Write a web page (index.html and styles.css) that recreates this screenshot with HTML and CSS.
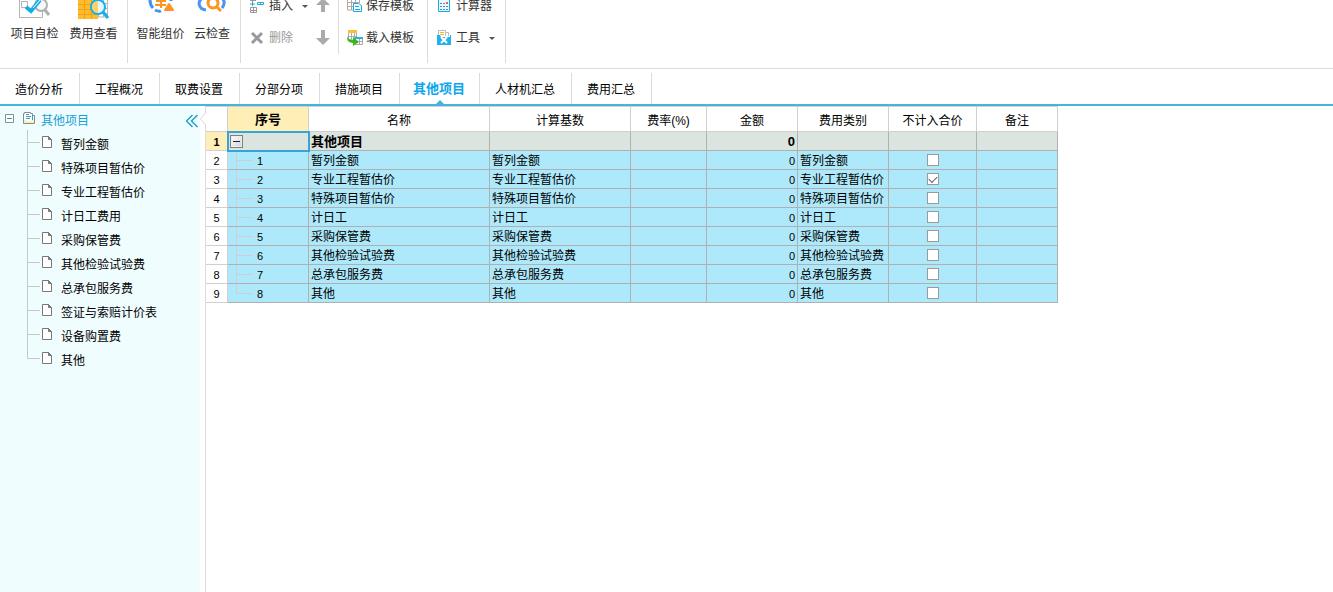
FILE: index.html
```html
<!DOCTYPE html>
<html lang="zh-CN">
<head>
<meta charset="utf-8">
<title>其他项目</title>
<link rel="stylesheet" href="styles.css">
</head>
<body>
<svg class="defs" aria-hidden="true">
  <symbol id="page" viewBox="0 0 10 12"><path d="M.5.5h6l3 3v8h-9z" fill="#fff" stroke="#777"/><path d="M6.5.5v3h3z" fill="#888" stroke="#777"/></symbol>
</svg>
<header class="ribbon">
  <div class="ribbon-inner">
    <div class="group large-group">
      <button class="large" type="button">
        <svg width="32" height="33" viewBox="0 0 32 33"><path d="M.5 1.500h23v30H.5z" fill="#fff" stroke="#b4b4b4"/><path d="M2.500 15.500h6v6h-6z" fill="none" stroke="#b4b4b4"/><circle cx="22" cy="19" r="6" fill="#f4f8fa" stroke="#b0b0b0" stroke-width="2"/><path d="M26 24l4 5" stroke="#b0b0b0" stroke-width="3"/><path d="M7 21l5 4 9-11" fill="none" stroke="#13aeea" stroke-width="4"/><path d="M14 22l7-8" stroke="#fff" stroke-width="1"/></svg>
        <span>项目自检</span></button>
      <button class="large" type="button">
        <svg width="32" height="33" viewBox="0 0 32 33"><path d="M15.500 4v27h14v-27M15 17.500h15M15 22.500h15M15 27.500h15M20.500 4v27M25.500 4v27" fill="none" stroke="#b8b8b8"/><path d="M0 2h20v31H0z" fill="#fdbb2d"/><path d="M0 18.500h13M0 23.500h13M0 28.500h20M6.500 14v19M13.500 14v19" stroke="#efa21a"/><circle cx="20" cy="21" r="7" fill="#e8f5fb" stroke="#12b1ed" stroke-width="2"/><path d="M14 21a6 6 0 0 1 6-6v12a6 6 0 0 1-6-6" fill="#ffd06a"/><path d="M25 26l5 6" stroke="#12b1ed" stroke-width="3"/></svg>
        <span>费用查看</span></button>
    </div>
    <div class="group large-group cloud-group">
      <button class="large" type="button">
        <svg width="32" height="33" viewBox="0 0 32 33"><path d="M5 14c0 4 1 6 3 8M10 24c2 1 4 2 6 1M26 12v3" fill="none" stroke="#4291f4" stroke-width="3"/><path d="M11 6l5 6 5-6M11 15h10M10 19h11M16 12v10" fill="none" stroke="#ff941f" stroke-width="2"/><path d="M24 18l4 6h-8z" fill="#ff941f" stroke="#ff941f" stroke-width="2" stroke-linejoin="round"/></svg>
        <span>智能组价</span></button>
      <button class="large narrow" type="button">
        <svg width="32" height="33" viewBox="0 0 32 33"><path d="M10 24c-8-1-9-9-3-12M26 12c3 3 3 6 0 10" fill="none" stroke="#4995f5" stroke-width="3"/><circle cx="17" cy="17" r="5" fill="#fff" stroke="#ff941f" stroke-width="3"/><path d="M20 20l5 5" stroke="#ff941f" stroke-width="3"/></svg>
        <span>云检查</span></button>
    </div>
    <div class="group small-group edit-group">
      <div class="column">
        <button class="small" type="button">
          <svg width="16" height="16" viewBox="0 0 16 16"><path d="M3.500 0v4M1 2.500h6M1.500 9.500h6v5h-6zM4.500 9v6M1 12.500h7" fill="none" stroke="#999"/><path d="M1 6h5M3.500 4v4M8.500 4.500h3v2h-3zM11.500 4.500h3v2h-3z" fill="none" stroke="#1aabdf"/></svg>
          <span>插入</span><i class="caret"></i></button>
        <button class="small disabled" type="button" disabled>
          <svg width="16" height="16" viewBox="0 0 16 16"><path d="M3 3l10 10M13 3L3 13" stroke="#999" stroke-width="3"/></svg>
          <span>删除</span></button>
      </div>
      <div class="column arrows">
        <button class="small" type="button" aria-label="上移"><svg width="14" height="16" viewBox="0 0 14 16"><path d="M7 0l7 7H9v7H5V7H0z" fill="#aaa"/></svg></button>
        <button class="small" type="button" aria-label="下移"><svg width="14" height="16" viewBox="0 0 14 16"><path d="M7 15l7-7H9V0H5v8H0z" fill="#aaa"/></svg></button>
      </div>
    </div>
    <div class="group small-group template-group">
      <div class="column">
        <button class="small" type="button">
          <svg width="16" height="16" viewBox="0 0 16 16"><path d="M.5 0v12h6M0 4.500h12M0 8.500h7M4.500 0v12M8.500 0v5M12.500 0v5" fill="none" stroke="#b5aaa1"/><path d="M6.500 5.500h5l3 2v6h-8z" fill="#fff" stroke="#14a9e5"/><path d="M8 8.500h4M8 11.500h5" stroke="#14a9e5"/></svg>
          <span>保存模板</span></button>
        <button class="small" type="button">
          <svg width="16" height="16" viewBox="0 0 16 16"><path d="M1.500 3v7h8V3M1 6.500h9M4.500 3v7M7.500 3v7" fill="#fff" stroke="#aaa"/><path d="M1 0h9v3H1z" fill="#fbbf32"/><path d="M8.500 8.500h7v6h-7zM8 11.500h8M12.500 8v7" fill="#fff" stroke="#aaa"/><path d="M8 7h8v2H8z" fill="#20b3ed"/><path d="M1 6c0 3 2 4 5 4V7l6 5-6 4v-3c-5 0-7-3-5-7z" fill="#39b81e"/></svg>
          <span>载入模板</span></button>
      </div>
    </div>
    <div class="group small-group tool-group">
      <div class="column">
        <button class="small" type="button">
          <svg width="16" height="16" viewBox="0 0 16 16"><path d="M2.500-1h11v14.500h-11z" fill="#e9f8ff" stroke="#1aabe7"/><path d="M4 5.500h8M4 8.500h8M4 11.500h8" stroke="#4d8dc7" stroke-dasharray="2 1"/><path d="M10 4h2v2h-2z" fill="#f05b50"/></svg>
          <span>计算器</span></button>
        <button class="small" type="button">
          <svg width="16" height="16" viewBox="0 0 16 16"><path d="M2.500 6V.5h7V6" fill="#fff" stroke="#bbb"/><path d="M9.500 2.500h3V6" fill="#fff" stroke="#bbb"/><path d="M4 2.500h4M4 4.500h4" stroke="#f9b61b"/><path d="M1 5h3l1 2h9v-2h1v10H1z" fill="#20b2ec"/><path d="M5 7l6 6M11 7l-6 6" stroke="#fff" stroke-width="2"/></svg>
          <span>工具</span><i class="caret"></i></button>
      </div>
    </div>
  </div>
</header>

<nav class="tabs">
  <a href="#">造价分析</a><a href="#">工程概况</a><a href="#">取费设置</a><a href="#">分部分项</a><a href="#">措施项目</a><a href="#" class="active" aria-current="page">其他项目</a><a href="#">人材机汇总</a><a href="#">费用汇总</a>
</nav>

<main class="workspace">
  <aside class="sidebar">
    <div class="root">
      <svg width="9" height="9" viewBox="0 0 9 9"><path d="M.5.5h8v8h-8z" fill="#fff" stroke="#8a8f94"/><path d="M2 4.500h5" stroke="#1c9fd0"/></svg>
      <svg class="root-icon" width="12" height="12" viewBox="0 0 12 12"><path d="M.5 11.500V1.500h1v-1h6v1h2v2h2v8z" fill="#fff" stroke="#8a8a8a"/><path d="M1 8h2l1 1h4l1-1h2v3H1z" fill="#fdf0b8"/><path d="M3 2.500h3M3 4.500h5M3 6.500h4M9.500 3v5" stroke="#2aa5d8"/></svg>
      <a href="#">其他项目</a>
      <button class="collapse" type="button" aria-label="收起"><svg width="12" height="14" viewBox="0 0 12 14"><path d="M6.500 1l-6 6 6 6M11.500 1l-6 6 6 6" fill="none" stroke="#1ba2c8" stroke-width="1.500"/></svg></button>
    </div>
    <ul class="tree">
      <li><svg><use href="#page"/></svg><a href="#">暂列金额</a></li>
      <li><svg><use href="#page"/></svg><a href="#">特殊项目暂估价</a></li>
      <li><svg><use href="#page"/></svg><a href="#">专业工程暂估价</a></li>
      <li><svg><use href="#page"/></svg><a href="#">计日工费用</a></li>
      <li><svg><use href="#page"/></svg><a href="#">采购保管费</a></li>
      <li><svg><use href="#page"/></svg><a href="#">其他检验试验费</a></li>
      <li><svg><use href="#page"/></svg><a href="#">总承包服务费</a></li>
      <li><svg><use href="#page"/></svg><a href="#">签证与索赔计价表</a></li>
      <li><svg><use href="#page"/></svg><a href="#">设备购置费</a></li>
      <li><svg><use href="#page"/></svg><a href="#">其他</a></li>
    </ul>
  </aside>
  <div class="splitter"><svg width="6" height="14" viewBox="0 0 6 14"><path d="M6 0v1L0 7l6 6v1z" fill="#fff"/><path d="M5.500 0v1l-5 6 5 6v1" fill="none" stroke="#d8d8d8"/></svg></div>
  <section class="content">
    <table class="grid">
      <colgroup><col class="c-row"><col class="c-no"><col class="c-name"><col class="c-base"><col class="c-rate"><col class="c-sum"><col class="c-kind"><col class="c-skip"><col class="c-note"></colgroup>
      <thead><tr><th></th><th class="current">序号</th><th>名称</th><th>计算基数</th><th>费率(%)</th><th>金额</th><th>费用类别</th><th>不计入合价</th><th>备注</th></tr></thead>
      <tbody>
        <tr class="total"><th>1</th><td class="selected"><button class="toggle" type="button" aria-label="折叠"></button></td><td>其他项目</td><td></td><td></td><td class="num">0</td><td></td><td></td><td></td></tr>
        <tr><th>2</th><td class="no">1</td><td>暂列金额</td><td>暂列金额</td><td></td><td class="num">0</td><td>暂列金额</td><td class="check"><input type="checkbox" aria-label="不计入合价 1"></td><td></td></tr>
        <tr><th>3</th><td class="no">2</td><td>专业工程暂估价</td><td>专业工程暂估价</td><td></td><td class="num">0</td><td>专业工程暂估价</td><td class="check"><input type="checkbox" checked aria-label="不计入合价 2"></td><td></td></tr>
        <tr><th>4</th><td class="no">3</td><td>特殊项目暂估价</td><td>特殊项目暂估价</td><td></td><td class="num">0</td><td>特殊项目暂估价</td><td class="check"><input type="checkbox" aria-label="不计入合价 3"></td><td></td></tr>
        <tr><th>5</th><td class="no">4</td><td>计日工</td><td>计日工</td><td></td><td class="num">0</td><td>计日工</td><td class="check"><input type="checkbox" aria-label="不计入合价 4"></td><td></td></tr>
        <tr><th>6</th><td class="no">5</td><td>采购保管费</td><td>采购保管费</td><td></td><td class="num">0</td><td>采购保管费</td><td class="check"><input type="checkbox" aria-label="不计入合价 5"></td><td></td></tr>
        <tr><th>7</th><td class="no">6</td><td>其他检验试验费</td><td>其他检验试验费</td><td></td><td class="num">0</td><td>其他检验试验费</td><td class="check"><input type="checkbox" aria-label="不计入合价 6"></td><td></td></tr>
        <tr><th>8</th><td class="no">7</td><td>总承包服务费</td><td>总承包服务费</td><td></td><td class="num">0</td><td>总承包服务费</td><td class="check"><input type="checkbox" aria-label="不计入合价 7"></td><td></td></tr>
        <tr><th>9</th><td class="no last">8</td><td>其他</td><td>其他</td><td></td><td class="num">0</td><td>其他</td><td class="check"><input type="checkbox" aria-label="不计入合价 8"></td><td></td></tr>
      </tbody>
    </table>
  </section>
</main>
</body>
</html>
```
FILE: styles.css
```css
* { box-sizing: border-box; }
body {
  margin: 0;
  min-height: 100vh;
  display: flex;
  flex-direction: column;
  background: #fff;
  color: #000;
  font: 12px/18px "Liberation Sans", "Noto Sans CJK SC", sans-serif;
}
a { color: inherit; text-decoration: none; }
button { margin: 0; padding: 0; border: 0; background: none; font: inherit; color: #333; }
svg { display: block; flex: none; }
.defs { position: absolute; width: 0; height: 0; }

/* ribbon */
.ribbon { overflow: hidden; padding-bottom: 5px; border-bottom: 1px solid #dcdcdc; }
.ribbon-inner { display: flex; align-items: flex-start; height: 77px; margin-top: -14px; }
.group { display: flex; height: 77px; border-right: 1px solid #dcdcdc; }
.large-group { padding: 0 4px 0 5px; }
.cloud-group { padding: 0 6px 0 3px; }
.large { display: flex; flex-direction: column; align-items: center; gap: 6px; width: 59px; }
.large.narrow { width: 44px; }
.small-group { padding-top: 4px; }
.edit-group { height: 68px; padding-left: 8px; }
.template-group { padding: 4px 13px 0 8px; }
.tool-group { padding: 4px 10px 0 8px; }
.column { display: flex; flex-direction: column; }
.small { display: flex; align-items: center; gap: 4px; height: 32px; }
.template-group .small { gap: 3px; }
.arrows { padding: 0 8px; }
.disabled { color: #999; }
.caret { margin-left: 5px; border: 3px solid transparent; border-top-color: #555; border-bottom: 0; }

/* tabs */
.tabs { display: flex; padding-top: 4px; border-bottom: 2px solid #45b5de; }
.tabs a { position: relative; padding: 8px 16px 5px 15px; border-right: 1px solid #dcdcdc; }
.tabs .active { padding: 7px 14px 6px 13px; color: #0da5ec; font-size: 13px; font-weight: bold; }
.tabs .active::after {
  content: "";
  position: absolute;
  left: 50%;
  bottom: 0;
  margin-left: -4px;
  border: 4px solid transparent;
  border-top: 0;
  border-bottom-color: #45b5de;
}

/* workspace */
.workspace { display: flex; flex: 1; }
.sidebar { width: 200px; flex: none; background: #f0fdff; }
.root { display: flex; align-items: center; height: 24px; padding: 0 2px 0 5px; color: #1a9fd4; }
.root-icon { margin: 0 6px 0 9px; }
.root a { padding-top: 5px; }
.collapse { margin: 5px 0 0 auto; }
.tree { list-style: none; margin: 0 0 0 27px; padding: 0; }
.tree li {
  display: flex;
  align-items: center;
  gap: 9px;
  height: 24px;
  padding-left: 15px;
  background: linear-gradient(#c8c8c8, #c8c8c8) 0 0 / 1px 100% no-repeat, linear-gradient(#c8c8c8, #c8c8c8) 0 12px / 13px 1px no-repeat;
}
.tree li:last-child { background-size: 1px 12px, 13px 1px; }
.tree svg { width: 10px; height: 12px; }
.tree a { padding-top: 5px; }
.splitter { width: 6px; flex: none; padding-top: 6px; border-right: 1px solid #dcdcdc; }

/* grid */
.content { flex: 1; min-width: 0; }
.grid { table-layout: fixed; width: 852px; border-collapse: separate; border-spacing: 0; border-top: 1px solid #d0d0d0; }
.c-row { width: 22px; }
.c-no { width: 81px; }
.c-name { width: 181px; }
.c-base { width: 141px; }
.c-rate { width: 76px; }
.c-sum, .c-kind { width: 91px; }
.c-skip { width: 88px; }
.c-note { width: 81px; }
.grid th, .grid td { height: 19px; padding: 2px 0 0 2px; border: solid #b0b0b0; border-width: 0 1px 1px 0; line-height: 16px; white-space: nowrap; }
.grid th { border-color: #d0d0d0; padding: 2px 0 0; font-weight: normal; text-align: center; font-size: 12px; }
.grid thead th { height: 25px; padding-top: 4px; }
.grid tbody th { font-size: 11px; }
.grid td { background: #aee9fb; }
.grid .total td { background-color: #dbe4de; font-size: 13px; font-weight: bold; }
.grid thead .current { padding-top: 1px; font-size: 13px; }
.grid .current, .grid .total th { background: #ffeeb5; font-weight: bold; }
.grid .num { padding: 2px 2px 0 0; font-size: 11px; text-align: right; }
.grid .no {
  padding: 2px 0 0 29px;
  font-size: 11px;
  background-image: linear-gradient(#cfcfcf, #cfcfcf), linear-gradient(#cfcfcf, #cfcfcf);
  background-position: 8px 0, 8px 9px;
  background-size: 1px 100%, 17px 1px;
  background-repeat: no-repeat;
}
.grid .no.last { background-size: 1px 9px, 17px 1px; }
.grid .selected { position: relative; padding: 0 0 0 2px; outline: 2px solid #36a5d5; outline-offset: -1px; }
.toggle { display: block; width: 13px; height: 13px; border: 1px solid #808080; background: linear-gradient(#222, #222) center / 7px 1px no-repeat, linear-gradient(135deg, #fff, #ccd0dc); box-shadow: inset 0 0 0 1px #eee; }
.grid .check { padding: 0; text-align: center; }
.check input { appearance: none; display: block; width: 12px; height: 12px; margin: 0 auto; border: 1px solid #9a9a9a; background: #fff; }
.check input:checked::before { content: ""; display: block; width: 7px; height: 4px; margin: 2px 0 0 1px; border: solid #5b5b6b; border-width: 0 0 1px 1px; transform: rotate(-45deg); }
```
